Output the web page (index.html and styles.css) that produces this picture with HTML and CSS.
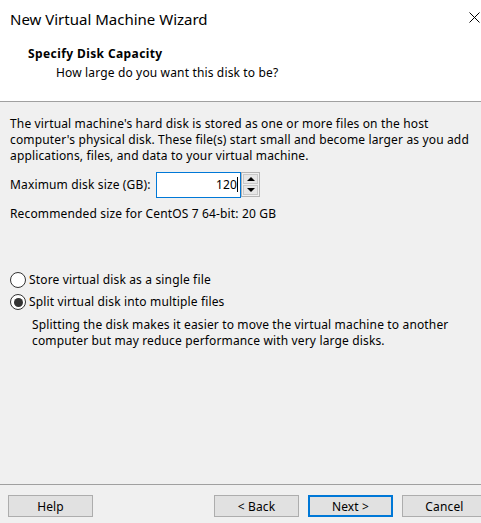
FILE: index.html
```html
<!DOCTYPE html>
<html lang="en">
<head>
    <meta charset="UTF-8">
    <title>New Virtual Machine Wizard</title>
    <link rel="stylesheet" href="styles.css">
</head>
<body>
    <div class="wizard">
        <div class="header">
            <div class="titlebar">
                <span class="title">New Virtual Machine Wizard</span>
                <svg class="close" width="11" height="11" viewBox="0 0 11 11"><path d="M0.5 0.5 L10.5 10.5 M10.5 0.5 L0.5 10.5" stroke="#000" stroke-width="1"/></svg>
            </div>
            <div class="heading">
                <div class="heading-title">Specify Disk Capacity</div>
                <div class="heading-sub">How large do you want this disk to be?</div>
            </div>
        </div>

        <div class="content">
            <p class="intro">The virtual machine's hard disk is stored as one or more files on the host computer's physical disk. These file(s) start small and become larger as you add applications, files, and data to your virtual machine.</p>
            <div class="size-row">
                <label>Maximum disk size (GB):</label>
                <div class="spin">
                    <div class="spin-field">120<span class="caret"></span></div>
                    <div class="spin-btns">
                        <div class="spin-btn"><span class="arrow-up"></span></div>
                        <div class="spin-btn"><span class="arrow-down"></span></div>
                    </div>
                </div>
            </div>
            <p class="recommend">Recommended size for CentOS 7 64-bit: 20 GB</p>

            <div class="options">
                <div class="radio-row"><span class="radio"></span>Store virtual disk as a single file</div>
                <div class="radio-row"><span class="radio checked"></span>Split virtual disk into multiple files</div>
                <p class="option-note">Splitting the disk makes it easier to move the virtual machine to another computer but may reduce performance with very large disks.</p>
            </div>
        </div>

        <div class="footer">
            <button class="btn">Help</button>
            <div class="nav-btns">
                <button class="btn">&lt; Back</button>
                <button class="btn primary">Next &gt;</button>
                <button class="btn">Cancel</button>
            </div>
        </div>
    </div>
</body>
</html>
```

FILE: styles.css
```css
body { margin: 0; font-family: "Noto Sans", "Liberation Sans", sans-serif; font-size: 12px; line-height: 16px; letter-spacing: 0.15px; color: #000; background: #f0f0f0; overflow: hidden; }
.wizard { display: flex; flex-direction: column; height: 523px; width: 481px; overflow: hidden; }

.header { background: #fff; height: 101px; border-bottom: 1px solid #a0a0a0; flex-shrink: 0; }
.titlebar { display: flex; justify-content: space-between; align-items: flex-start; padding: 9px 0 0 10px; height: 37px; box-sizing: border-box; }
.title { font-size: 15px; line-height: 20px; letter-spacing: 0; }
.close { margin: 3px 1px 0 0; }
.heading { padding-left: 28px; margin-top: 9px; }
.heading-title { font-weight: bold; letter-spacing: 0.4px; }
.heading-sub { padding-left: 28px; margin-top: 3px; }

.content { flex: 1; padding: 14px 10px 0 10px; }
.intro { margin: 0; }
.size-row { display: flex; align-items: center; margin-top: 8px; height: 26px; }
.size-row label { width: 146px; }
.spin { display: flex; height: 26px; }
.spin-field { width: 85px; box-sizing: border-box; border: 1px solid #0078d7; background: #fff; padding: 4px 2px 0 0; display: flex; justify-content: flex-end; align-items: flex-start; }
.caret { width: 1px; height: 15px; background: #000; }
.spin-btns { display: flex; flex-direction: column; width: 19px; height: 25px; border: 1px solid #b4b4b4; box-sizing: border-box; background: #f0f0f0; padding: 1px; gap: 1px; }
.spin-btn { flex: 1; background: #e6e6e6; border: 1px solid #c8c8c8; display: flex; align-items: center; justify-content: center; }
.arrow-up { width: 0; height: 0; border-left: 4px solid transparent; border-right: 4px solid transparent; border-bottom: 4px solid #000; }
.arrow-down { width: 0; height: 0; border-left: 4px solid transparent; border-right: 4px solid transparent; border-top: 4px solid #000; }
.recommend { margin: 8px 0 0 0; }

.options { margin-top: 47px; }
.radio-row { display: flex; align-items: center; height: 22px; }
.radio { width: 14px; height: 14px; border: 1px solid #333; border-radius: 50%; background: #fff; margin-right: 3px; display: flex; align-items: center; justify-content: center; flex-shrink: 0; }
.radio.checked::after { content: ''; width: 9px; height: 9px; border-radius: 50%; background: #333; }
.option-note { margin: 4px 0 0 22px; }

.footer { flex-shrink: 0; border-top: 1px solid #a0a0a0; height: 28px; display: flex; align-items: flex-start; padding: 10px 0 0 8px; }
.btn { width: 85px; height: 22px; flex-shrink: 0; background: #e1e1e1; border: 1px solid #adadad; font-family: inherit; font-size: 12px; letter-spacing: 0.15px; color: #000; padding: 0; }
.btn.primary { border: 2px solid #0078d7; }
.nav-btns { display: flex; gap: 9px; margin-left: 121px; flex-shrink: 0; }
```
